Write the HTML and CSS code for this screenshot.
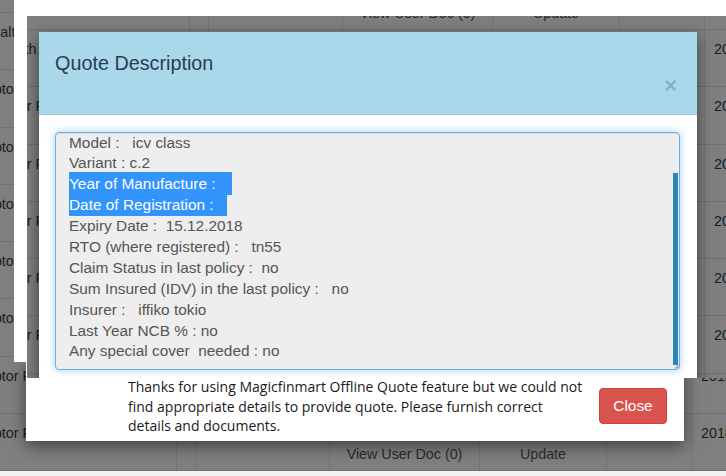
FILE: index.html
```html
<!DOCTYPE html>
<html lang="en">
<head>
<meta charset="utf-8">
<title>Quote Description</title>
<link rel="stylesheet" href="styles.css">
</head>
<body>
<div class="layer-a">
  <div class="tbl tbl-a">
    <div class="td c1"></div><div class="td"></div><div class="td"></div><div class="td c4"></div><div class="td c5"></div><div class="td"></div><div class="td c7"></div>
    <div class="td c1"><span class="cut">Health</span></div><div class="td"></div><div class="td"></div><div class="td c4"></div><div class="td c5"></div><div class="td"></div><div class="td c7"></div>
    <div class="td c1"><span class="cut">Motor F</span></div><div class="td"></div><div class="td"></div><div class="td c4"></div><div class="td c5"></div><div class="td"></div><div class="td c7"></div>
    <div class="td c1"><span class="cut">Motor F</span></div><div class="td"></div><div class="td"></div><div class="td c4"></div><div class="td c5"></div><div class="td"></div><div class="td c7"></div>
    <div class="td c1"><span class="cut">Motor F</span></div><div class="td"></div><div class="td"></div><div class="td c4"></div><div class="td c5"></div><div class="td"></div><div class="td c7"></div>
    <div class="td c1"><span class="cut">Motor F</span></div><div class="td"></div><div class="td"></div><div class="td c4"></div><div class="td c5"></div><div class="td"></div><div class="td c7"></div>
    <div class="td c1"><span class="cut">Motor F</span></div><div class="td"></div><div class="td"></div><div class="td c4"></div><div class="td c5"></div><div class="td"></div><div class="td c7"></div>
    <div class="td c1"><span class="cut">Motor F</span></div><div class="td"></div><div class="td"></div><div class="td c4"></div><div class="td c5"></div><div class="td"></div><div class="td c7">2018-12-10</div>
    <div class="td c1"><span class="cut">Motor F</span></div><div class="td"></div><div class="td"></div><div class="td c4">View User Doc (0)</div><div class="td c5">Update</div><div class="td"></div><div class="td c7">2018-12-10</div>
  </div>
  <div class="footer-a">
    <p class="footer-msg">Thanks for using Magicfinmart Offline Quote feature but we could not find appropriate details to provide quote. Please furnish correct details and documents.</p>
    <button class="btn-close" type="button">Close</button>
  </div>
</div>

<div class="layer-b">
  <div class="b-top"></div>
  <div class="b-left"></div>
  <div class="b-view">
    <div class="tbl tbl-b">
      <div class="td c1"></div><div class="td"></div><div class="td"></div><div class="td c4">View User Doc (0)</div><div class="td c5">Update</div><div class="td"></div><div class="td c7"></div>
      <div class="td c1"><span class="cut">Health</span></div><div class="td"></div><div class="td"></div><div class="td c4"></div><div class="td c5"></div><div class="td"></div><div class="td c7">2018-12-14</div>
      <div class="td c1"><span class="cut">Motor F</span></div><div class="td"></div><div class="td"></div><div class="td c4"></div><div class="td c5"></div><div class="td"></div><div class="td c7">2018-12-14</div>
      <div class="td c1"><span class="cut">Motor F</span></div><div class="td"></div><div class="td"></div><div class="td c4"></div><div class="td c5"></div><div class="td"></div><div class="td c7">2018-12-13</div>
      <div class="td c1"><span class="cut">Motor F</span></div><div class="td"></div><div class="td"></div><div class="td c4"></div><div class="td c5"></div><div class="td"></div><div class="td c7">2018-12-12</div>
      <div class="td c1"><span class="cut">Motor F</span></div><div class="td"></div><div class="td"></div><div class="td c4"></div><div class="td c5"></div><div class="td"></div><div class="td c7">2018-12-11</div>
      <div class="td c1"><span class="cut">Motor F</span></div><div class="td"></div><div class="td"></div><div class="td c4"></div><div class="td c5"></div><div class="td"></div><div class="td c7">2018-12-11</div>
      <div class="td c1"></div><div class="td"></div><div class="td"></div><div class="td c4"></div><div class="td c5"></div><div class="td"></div><div class="td c7"></div>
    </div>

    <div class="modal">
      <div class="modal-header">
        <h4 class="modal-title">Quote Description</h4>
        <div class="close-row"><span class="close-x">&times;</span></div>
      </div>
      <div class="modal-body">
        <div class="textarea">
          <div class="ta-lines">
            <div class="ln">Model :   icv class</div>
            <div class="ln">Variant : c.2</div>
            <div class="ln"><span class="sel sel-1">Year of Manufacture : </span></div>
            <div class="ln"><span class="sel sel-2">Date of Registration : </span></div>
            <div class="ln">Expiry Date :  15.12.2018</div>
            <div class="ln">RTO (where registered) :   tn55</div>
            <div class="ln">Claim Status in last policy :  no</div>
            <div class="ln">Sum Insured (IDV) in the last policy :   no</div>
            <div class="ln">Insurer :   iffiko tokio</div>
            <div class="ln">Last Year NCB % : no</div>
            <div class="ln">Any special cover  needed : no</div>
          </div>
          <div class="scroll-thumb"></div>
          <svg class="grip" width="5" height="5" viewBox="0 0 5 5"><path d="M4.5 1 L1 4.5 M4.5 3 L3 4.5" stroke="#555" stroke-width="0.8" fill="none"/></svg>
        </div>
      </div>
    </div>
  </div>
</div>
</body>
</html>
```

FILE: styles.css
```css
* { box-sizing: border-box; }

html, body {
  margin: 0;
  padding: 0;
}

body {
  width: 726px;
  height: 476px;
  overflow: hidden;
  position: relative;
  background: #f2f2f2;
  font-family: "Liberation Sans", Arial, sans-serif;
}

/* ---------- shared darkened table ---------- */
.tbl {
  display: grid;
  grid-template-columns: 204px 5px 148px 150px 127px 85px 90px;
  grid-auto-rows: 57.25px;
  width: max-content;
  background: #7f7f7f;
}

.td {
  border-right: 1px solid #737373;
  border-bottom: 1px solid #707070;
  padding: 9px 9px;
  font-size: 14.3px;
  line-height: 20.9px;
  color: #1c1c1c;
  white-space: nowrap;
  overflow: hidden;
}

.cut {
  display: block;
  width: 44px;
  overflow: hidden;
}

.c4, .c5 {
  text-align: center;
  padding-top: 29.9px;
  color: #262c33;
}

/* ---------- back layer (screenshot A) ---------- */
.layer-a {
  position: relative;
  height: 476px;
  overflow: hidden;
}

.tbl-a {
  margin-left: -27px;
  margin-top: -44.25px;
}

.footer-a {
  position: absolute;
  left: 26px;
  top: 361px;
  width: 658px;
  height: 80px;
  background: #fff;
  display: flex;
  justify-content: flex-end;
  align-items: flex-start;
  gap: 15px;
  padding: 16.25px 17px 0 0;
  box-shadow: 0 5px 15px rgba(0, 0, 0, 0.5);
}

.footer-msg {
  width: 456px;
  margin: 0;
  font-family: "Open Sans", "Noto Sans", sans-serif;
  font-size: 14px;
  line-height: 19.5px;
  color: #1a1a1a;
}

.btn-close {
  margin-top: 10.75px;
  width: 68px;
  height: 36px;
  padding: 0;
  background: #d9534f;
  border: 1px solid #d43f3a;
  border-radius: 4px;
  color: #fff;
  font-family: "Liberation Sans", Arial, sans-serif;
  font-size: 15.4px;
}

/* ---------- front layer (screenshot B) ---------- */
.layer-b {
  position: absolute;
  left: 14px;
  top: 0;
  width: 712px;
  height: 378px;
  display: grid;
  grid-template-columns: 13px 1fr;
  grid-template-rows: 16px 362px;
}

.b-top {
  grid-column: 1 / -1;
  background: #fff;
}

.b-left {
  background: #fff;
  height: 346px;
}

.b-view {
  position: relative;
  overflow: hidden;
  background: #7f7f7f;
}

.tbl-b {
  margin-left: -41px;
  margin-top: -43.25px;
}

/* ---------- modal ---------- */
.modal {
  position: absolute;
  left: 12px;
  top: 16px;
  width: 658px;
  height: 420px;
  background: #fff;
  box-shadow: 0 5px 15px rgba(0, 0, 0, 0.5);
}

.modal-header {
  height: 83px;
  padding: 20px 19px 0 16px;
  background: #a9d8eb;
  border-bottom: 1px solid #93c8dd;
}

.modal-title {
  margin: 0;
  font-size: 19.8px;
  line-height: 22px;
  font-weight: normal;
  color: #2b3e4e;
}

.close-row {
  text-align: right;
  line-height: 23px;
  margin-right: 1px;
}

.close-x {
  font-size: 22px;
  font-weight: bold;
  color: rgba(0, 0, 0, 0.2);
}

.modal-body {
  padding: 17px 17px 0 16px;
}

.textarea {
  position: relative;
  height: 238px;
  padding: 0 13px;
  overflow: hidden;
  background: #eeeeee;
  border: 1px solid #66afe9;
  border-radius: 4px;
  box-shadow: inset 0 1px 1px rgba(0, 0, 0, 0.075), 0 0 8px rgba(102, 175, 233, 0.6);
}

.ta-lines {
  margin-top: -0.5px;
  font-size: 15.4px;
  line-height: 20.9px;
  color: #555;
}

.ln {
  white-space: pre;
  height: 20.9px;
}

.sel {
  display: inline-block;
  vertical-align: top;
  background: #3394fb;
  color: #fff;
  box-shadow: 0 -2px 0 #3394fb;
}

.sel-1 { width: 163px; }
.sel-2 { width: 158px; }

.scroll-thumb {
  position: absolute;
  right: 1px;
  top: 40px;
  bottom: 4px;
  width: 5px;
  background: #2a87b3;
}

.grip {
  position: absolute;
  right: 0;
  bottom: 0;
}
```
